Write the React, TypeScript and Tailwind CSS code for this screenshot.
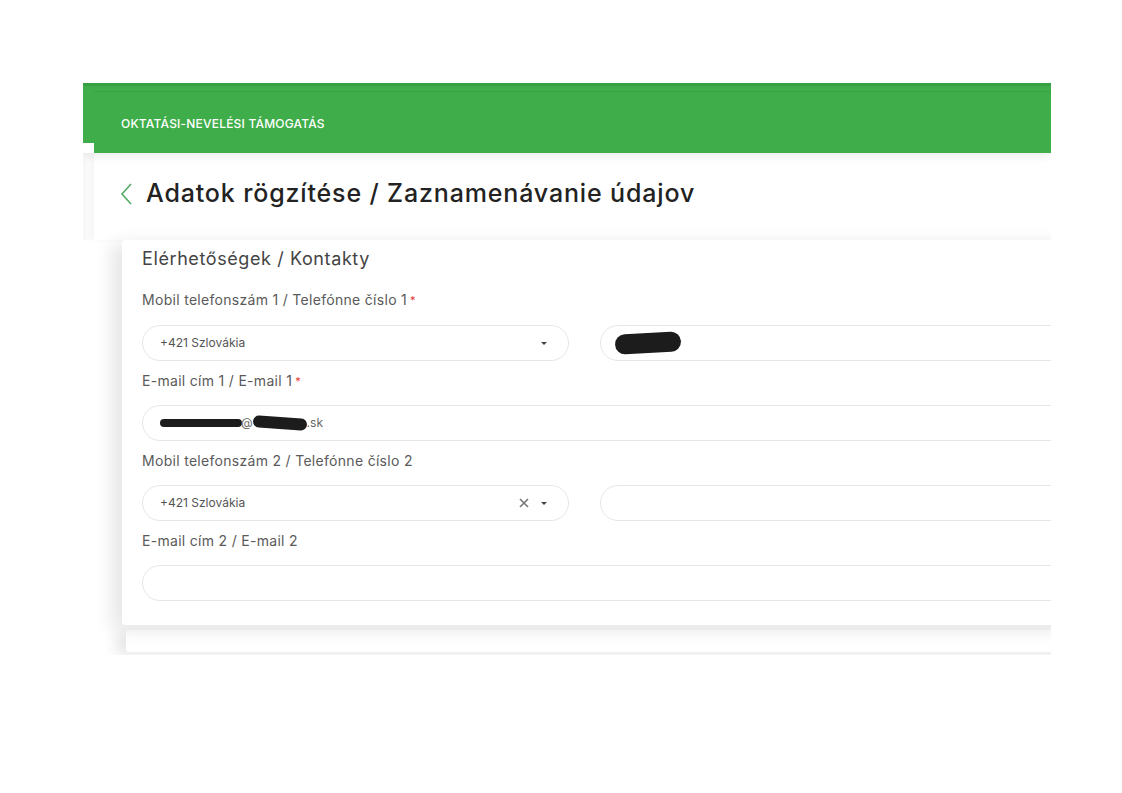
import React from "react";

const Blob = ({ w, h, className = "" }: { w: string; h: string; className?: string }) => (
  <span className={`inline-block bg-[#1c1c1c] rounded-full ${w} ${h} ${className}`} />
);

const Caret = () => (
  <svg width="8" height="5" viewBox="0 0 8 5" className="shrink-0">
    <path d="M1 1 L7 1 L4 4 Z" fill="#444" />
  </svg>
);

const Label = ({ children, req }: { children: React.ReactNode; req?: boolean }) => (
  <div className="h-[20px] leading-[20px] text-[14px] text-[#5a5a5a] tracking-[0.3px]">
    {children}
    {req && <span className="text-[#e53935] text-[11px] align-top ml-[3px]">*</span>}
  </div>
);

const Select = ({ clear }: { clear?: boolean }) => (
  <div className="w-[427px] h-[36px] rounded-full border border-[#e6e6e6] flex items-center pl-[17px] pr-[20px]">
    <span className="flex-1 text-[12px] text-[#555]">+421 Szlovákia</span>
    {clear && (
      <svg width="10" height="10" viewBox="0 0 10 10" className="mr-[11px]">
        <path d="M1 1 L9 9 M9 1 L1 9" stroke="#777" strokeWidth="1.6" />
      </svg>
    )}
    <Caret />
  </div>
);

export default function App() {
  return (
    <div className="min-h-[793px] w-[1122px] bg-white pt-[83px] pl-[83px] font-['Inter',sans-serif]">
      <div className="w-[968px] h-[572px] overflow-hidden flex flex-col">
        {/* header */}
        <div className="flex relative z-10 shadow-[0_4px_8px_rgba(0,0,0,0.07)]">
          <div className="w-[11px] h-[60px] bg-[#3fae4a] border-t-[3px] border-[#37a142]" />
          <div className="flex-1 flex flex-col">
            <div className="h-[8px] bg-[#3fae4a] border-t-[3px] border-[#37a142]" />
            <div className="h-[62px] bg-[#3fae4a] border-t border-[#3aa444] flex items-center pl-[27px] pt-[2px]">
              <span className="text-white text-[12px] font-medium tracking-[0.2px]">
                OKTATÁSI-NEVELÉSI TÁMOGATÁS
              </span>
            </div>
          </div>
        </div>
        {/* title panel */}
        <div className="flex">
          <div className="w-[11px] bg-gradient-to-r from-[#f6f6f6] to-white" />
          <div className="flex-1 h-[87px] bg-white shadow-[-3px_0_5px_rgba(0,0,0,0.04)] flex items-center pl-[26px] pb-[6px]">
            <svg width="14" height="24" viewBox="0 0 14 24" className="mr-[12px]">
              <polyline points="11,2 2,12 11,22" fill="none" stroke="#52ab63" strokeWidth="1.6" />
            </svg>
            <h1 className="text-[25px] font-medium text-[#222] tracking-[0.85px]">
              Adatok rögzítése / Zaznamenávanie údajov
            </h1>
          </div>
        </div>
        {/* cards */}
        <div className="flex flex-col pl-[39px]">
          <div className="w-[1100px] bg-white rounded-[3px] shadow-[-10px_4px_18px_rgba(0,0,0,0.1)] pt-[7px] pb-[24px] pl-[20px] pr-[20px] relative z-[1]">
            <div className="h-[24px] leading-[24px] text-[18px] text-[#444] tracking-[0.6px]">Elérhetőségek / Kontakty</div>
            <div className="mt-[19px]">
              <Label req>Mobil telefonszám 1 / Telefónne číslo 1</Label>
              <div className="mt-[15px] flex gap-[31px]">
                <Select />
                <div className="flex-1 h-[36px] rounded-full border border-[#e6e6e6] flex items-center pl-[14px]">
                  <Blob w="w-[66px]" h="h-[20px]" className="rotate-[-3deg]" />
                </div>
              </div>
            </div>
            <div className="mt-[10px]">
              <Label req>E-mail cím 1 / E-mail 1</Label>
              <div className="mt-[14px] h-[36px] rounded-full border border-[#e6e6e6] flex items-center pl-[17px] text-[12px] text-[#666]">
                <Blob w="w-[82px]" h="h-[8px]" />
                <span className="ml-[-1px]">@</span>
                <Blob w="w-[54px]" h="h-[12px]" className="rotate-[4deg]" />
                <span>.sk</span>
              </div>
            </div>
            <div className="mt-[10px]">
              <Label>Mobil telefonszám 2 / Telefónne číslo 2</Label>
              <div className="mt-[14px] flex gap-[31px]">
                <Select clear />
                <div className="flex-1 h-[36px] rounded-full border border-[#e6e6e6]" />
              </div>
            </div>
            <div className="mt-[10px]">
              <Label>E-mail cím 2 / E-mail 2</Label>
              <div className="mt-[14px] h-[36px] rounded-full border border-[#e6e6e6]" />
            </div>
          </div>
          <div className="ml-[4px] mt-[5px] w-[1100px] h-[22px] bg-white rounded-[3px] shadow-[-10px_3px_14px_rgba(0,0,0,0.1)]" />
        </div>
      </div>
    </div>
  );
}
